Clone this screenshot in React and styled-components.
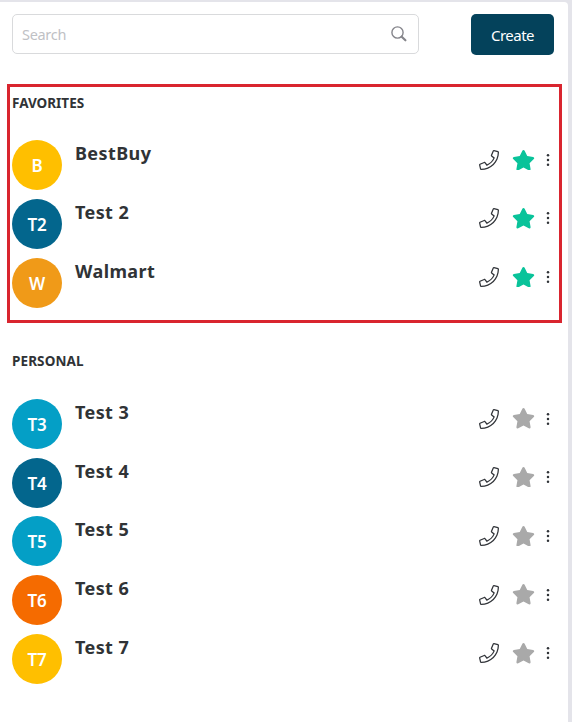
import React from "react";
import styled, { createGlobalStyle } from "styled-components";

const GlobalStyle = createGlobalStyle`
  *, *::before, *::after { box-sizing: border-box; }
  body { margin: 0; background: #e4e4ea; font-family: "Noto Sans", "Open Sans", sans-serif; color: #303336; }
`;

const Page = styled.div`
  height: 722px;
  padding: 2px 4px 0 0;
  overflow: hidden;
`;

const Panel = styled.main`
  height: 720px;
  background: #fff;
  border-radius: 0 4px 0 0;
  padding: 12px 6px 0 7px;
`;

const Toolbar = styled.header`
  display: flex;
  align-items: flex-start;
  justify-content: space-between;
  padding: 0 8px 0 5px;
`;

const SearchBox = styled.label`
  display: flex;
  align-items: center;
  width: 407px;
  height: 40px;
  padding: 0 11px 0 9px;
  border: 1px solid #d9dadc;
  border-radius: 5px;
`;

const SearchInput = styled.input`
  flex: 1;
  min-width: 0;
  padding: 0;
  border: 0;
  outline: 0;
  font: 400 14.5px "Noto Sans", sans-serif;
  letter-spacing: -0.3px;
  &::placeholder { color: #bfc1c5; opacity: 1; }
`;

const CreateButton = styled.button`
  width: 83px;
  height: 41px;
  padding: 0;
  border: 0;
  border-radius: 5px;
  background: #04425b;
  color: #fff;
  font: 400 15px "Noto Sans", sans-serif;
  letter-spacing: -0.55px;
`;

const Section = styled.section`
  width: 555px;
  height: ${(p) => (p.$highlighted ? "239px" : "auto")};
  margin-top: ${(p) => (p.$highlighted ? "29px" : "19px")};
  border: 3px solid ${(p) => (p.$highlighted ? "#d9252f" : "transparent")};
  padding: 0 5px 0 2px;
`;

const SectionTitle = styled.h2`
  margin: 0;
  padding: 6px 0 0;
  height: ${(p) => p.$height};
  font-size: 13.5px;
  line-height: 20px;
  font-weight: 700;
  letter-spacing: ${(p) => p.$tracking};
`;

const ContactList = styled.ul`
  display: grid;
  gap: 8.7px;
  margin: 0;
  padding: 0;
  list-style: none;
`;

const ContactRow = styled.li`
  display: flex;
  height: 50px;
`;

const Avatar = styled.span`
  display: flex;
  align-items: center;
  justify-content: center;
  width: 50px;
  height: 50px;
  padding-top: 1px;
  border-radius: 50%;
  background: ${(p) => p.$color};
  color: #fff;
  font-size: 17px;
  font-weight: 600;
  letter-spacing: -0.2px;
`;

const Name = styled.span`
  flex: 1;
  margin-left: 13px;
  font-size: 18px;
  line-height: 27px;
  font-weight: 700;
  letter-spacing: 0.4px;
`;

const Actions = styled.div`
  display: flex;
  align-items: center;
  height: 39px;
`;

const IconButton = styled.button`
  display: flex;
  align-items: center;
  justify-content: center;
  width: ${(p) => p.$width}px;
  height: 24px;
  margin-right: ${(p) => p.$gap || 0}px;
  padding: 0;
  border: 0;
  background: none;
  color: ${(p) => p.$color || "#303338"};
  svg { display: block; fill: currentColor; }
`;

const SearchIcon = () => (
  <svg width="16" height="16" viewBox="0 0 16 16" fill="none" stroke="#85858b">
    <circle cx="6.5" cy="6.5" r="5.6" strokeWidth="1.4" />
    <path d="M10.7 10.7 14.4 14.3" strokeWidth="2.2" strokeLinecap="round" />
  </svg>
);

const PhoneIcon = () => (
  <svg width="20" height="20" viewBox="0 0 512 512">
    <path d="M487.8 24.1L387 .8c-14.7-3.4-29.8 4.2-35.8 18.1l-46.5 108.5c-5.5 12.7-1.8 27.7 8.9 36.5l53.9 44.1c-34 69.2-90.3 125.6-159.6 159.6l-44.1-53.9c-8.8-10.7-23.8-14.4-36.5-8.9L18.9 351.3C5 357.3-2.6 372.3.8 387L24 487.7C27.3 502 39.9 512 54.5 512 306.7 512 512 307.8 512 54.5c0-14.6-10-27.2-24.2-30.4zM55.1 480l-23-99.6 107.4-46 59.5 72.8c103.6-48.6 159.7-104.9 208.1-208.1l-72.8-59.5 46-107.4 99.6 23C479.7 289.7 289.6 479.7 55.1 480z" />
  </svg>
);

const StarIcon = () => (
  <svg width="23" height="20.5" viewBox="0 0 576 512">
    <path d="M259.3 17.8L194 150.2 47.9 171.5c-26.2 3.8-36.7 36.1-17.7 54.6l105.7 103-25 145.5c-4.5 26.3 23.2 46 46.4 33.7L288 439.6l130.7 68.7c23.2 12.2 50.9-7.4 46.4-33.7l-25-145.5 105.7-103c19-18.5 8.5-50.8-17.7-54.6L382 150.2 316.7 17.8c-11.7-23.6-45.6-23.9-57.4 0z" />
  </svg>
);

const MoreIcon = () => (
  <svg width="4" height="14" viewBox="0 0 4 14">
    <circle cx="2" cy="2.3" r="1.25" />
    <circle cx="2" cy="7" r="1.25" />
    <circle cx="2" cy="11.7" r="1.25" />
  </svg>
);

const favorites = [
  { name: "BestBuy", initials: "B", color: "#ffbf00" },
  { name: "Test 2", initials: "T2", color: "#03668d" },
  { name: "Walmart", initials: "W", color: "#f09a18" },
];

const personal = [
  { name: "Test 3", initials: "T3", color: "#049fc6" },
  { name: "Test 4", initials: "T4", color: "#03668d" },
  { name: "Test 5", initials: "T5", color: "#049fc6" },
  { name: "Test 6", initials: "T6", color: "#f56b00" },
  { name: "Test 7", initials: "T7", color: "#ffbf00" },
];

const Contact = ({ contact, favorite }) => (
  <ContactRow>
    <Avatar $color={contact.color}>{contact.initials}</Avatar>
    <Name>{contact.name}</Name>
    <Actions>
      <IconButton $width={20} $gap={12} aria-label="Call"><PhoneIcon /></IconButton>
      <IconButton $width={24} $gap={11} $color={favorite ? "#09c39a" : "#a9a9a9"} aria-label="Favorite"><StarIcon /></IconButton>
      <IconButton $width={4} $gap={4} aria-label="More"><MoreIcon /></IconButton>
    </Actions>
  </ContactRow>
);

const Group = ({ title, contacts, favorite, tracking, titleHeight }) => (
  <Section $highlighted={favorite}>
    <SectionTitle $tracking={tracking} $height={titleHeight}>{title}</SectionTitle>
    <ContactList>
      {contacts.map((c) => <Contact key={c.name} contact={c} favorite={favorite} />)}
    </ContactList>
  </Section>
);

export default function App() {
  return (
    <Page>
      <GlobalStyle />
      <Panel>
        <Toolbar>
          <SearchBox>
            <SearchInput placeholder="Search" />
            <SearchIcon />
          </SearchBox>
          <CreateButton>Create</CreateButton>
        </Toolbar>
        <Group title="FAVORITES" contacts={favorites} favorite tracking="0" titleHeight="53.3px" />
        <Group title="PERSONAL" contacts={personal} tracking="0.1px" titleHeight="54px" />
      </Panel>
    </Page>
  );
}
